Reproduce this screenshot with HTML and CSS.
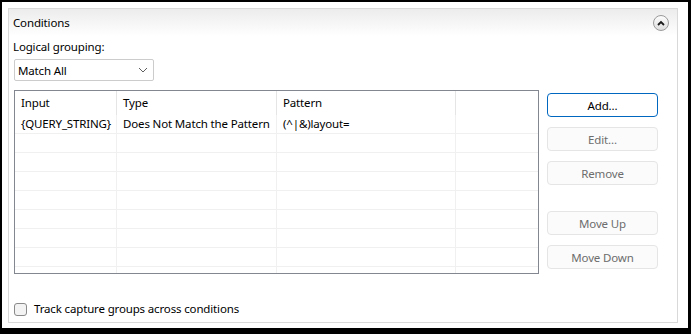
FILE: index.html
```html
<!DOCTYPE html>
<html lang="en">
<head>
    <meta charset="UTF-8">
    <title>Conditions</title>
    <link rel="stylesheet" href="styles.css">
</head>
<body>
    <div class="window">
        <div class="panel">
            <div class="panel-header">
                <span class="panel-title">Conditions</span>
                <span class="collapse-btn">
                    <svg width="8" height="6" viewBox="0 0 8 6"><path d="M1 5 L4 2 L7 5" fill="none" stroke="#1a1a1a" stroke-width="1.8"/></svg>
                </span>
            </div>

            <div class="panel-body">
                <div class="field-label">Logical grouping:</div>
                <div class="select">
                    <span>Match All</span>
                    <svg width="10" height="6" viewBox="0 0 10 6"><path d="M1 1 L5 5 L9 1" fill="none" stroke="#606060" stroke-width="1"/></svg>
                </div>

                <div class="main-row">
                    <div class="list-view">
                        <div class="list-row list-head">
                            <div class="cell">Input</div>
                            <div class="cell">Type</div>
                            <div class="cell">Pattern</div>
                            <div class="cell"></div>
                        </div>
                        <div class="list-row">
                            <div class="cell">{QUERY_STRING}</div>
                            <div class="cell">Does Not Match the Pattern</div>
                            <div class="cell">(^|&amp;)layout=</div>
                            <div class="cell"></div>
                        </div>
                        <div class="list-row"><div class="cell"></div><div class="cell"></div><div class="cell"></div><div class="cell"></div></div>
                        <div class="list-row"><div class="cell"></div><div class="cell"></div><div class="cell"></div><div class="cell"></div></div>
                        <div class="list-row"><div class="cell"></div><div class="cell"></div><div class="cell"></div><div class="cell"></div></div>
                        <div class="list-row"><div class="cell"></div><div class="cell"></div><div class="cell"></div><div class="cell"></div></div>
                        <div class="list-row"><div class="cell"></div><div class="cell"></div><div class="cell"></div><div class="cell"></div></div>
                        <div class="list-row"><div class="cell"></div><div class="cell"></div><div class="cell"></div><div class="cell"></div></div>
                        <div class="list-row"><div class="cell"></div><div class="cell"></div><div class="cell"></div><div class="cell"></div></div>
                        <div class="list-row"><div class="cell"></div><div class="cell"></div><div class="cell"></div><div class="cell"></div></div>
                    </div>

                    <div class="button-col">
                        <button class="btn btn-default">Add...</button>
                        <button class="btn">Edit...</button>
                        <button class="btn">Remove</button>
                        <button class="btn btn-spaced">Move Up</button>
                        <button class="btn">Move Down</button>
                    </div>
                </div>

                <label class="check">
                    <span class="check-box"></span>
                    <span>Track capture groups across conditions</span>
                </label>
            </div>
        </div>
    </div>
</body>
</html>
```

FILE: styles.css
```css
body {
    margin: 0;
    background-color: #000;
    font-family: "Noto Sans", "Open Sans", sans-serif;
    font-size: 11.5px;
    letter-spacing: -0.15px;
    color: #000;
}
.window {
    margin: 2px 3px 6px 2px;
    height: 326px;
    padding: 6px 10px 5px 6px;
    box-sizing: border-box;
    background-color: #fff;
}
.panel {
    height: 100%;
    border: 1px solid #d9d9d9;
    box-sizing: border-box;
    display: flex;
    flex-direction: column;
}
.panel-header {
    height: 27px;
    display: flex;
    align-items: center;
    justify-content: space-between;
    padding: 0 8px 0 4px;
    background: linear-gradient(#ececec, #ffffff);
}
.panel-title {
    line-height: 16px;
}
.collapse-btn {
    width: 14px;
    height: 14px;
    border: 1px solid #9a9a9a;
    border-radius: 50%;
    background: linear-gradient(#fdfdfd, #dedede);
    display: flex;
    align-items: center;
    justify-content: center;
}
.panel-body {
    flex: 1;
    padding: 3px 0 0 5px;
    display: flex;
    flex-direction: column;
}
.field-label {
    line-height: 16px;
    margin-left: -1px;
}
.select {
    margin-top: 4px;
    width: 140px;
    height: 22px;
    box-sizing: border-box;
    border: 1px solid #cccccc;
    border-radius: 2px;
    display: flex;
    align-items: center;
    justify-content: space-between;
    padding: 0 5px 0 3px;
}
.main-row {
    margin-top: 9px;
    display: flex;
    gap: 8px;
}
.list-view {
    width: 525px;
    height: 184px;
    box-sizing: border-box;
    border: 1px solid #828790;
    overflow: hidden;
}
.list-row {
    display: grid;
    grid-template-columns: 102px 160px 179px 82px;
    height: 19px;
    box-sizing: border-box;
    border-bottom: 1px solid #f0f0f0;
}
.list-row .cell {
    border-right: 1px solid #f0f0f0;
    padding-left: 6px;
    line-height: 18px;
    white-space: nowrap;
    overflow: hidden;
}
.list-row .cell:last-child {
    border-right: none;
}
.list-head {
    height: 24px;
    border-bottom: none;
}
.list-head .cell {
    line-height: 23px;
    border-right-color: #e5e5e5;
}
.button-col {
    display: flex;
    flex-direction: column;
    gap: 10px;
    padding-top: 3px;
}
.btn {
    width: 111px;
    height: 24px;
    font-family: inherit;
    font-size: 11.5px;
    letter-spacing: -0.15px;
    color: #6d6d6d;
    background-color: #fbfbfb;
    border: 1px solid #e5e5e5;
    border-radius: 4px;
    padding: 0;
}
.btn-default {
    color: #000;
    background-color: #fff;
    border-color: #0067c0;
}
.btn-spaced {
    margin-top: 16px;
}
.check {
    margin-top: auto;
    margin-bottom: 5px;
    display: flex;
    align-items: center;
    gap: 7px;
    line-height: 16px;
}
.check-box {
    width: 13px;
    height: 13px;
    box-sizing: border-box;
    border: 1px solid #8a8a8a;
    border-radius: 3px;
    background-color: #f3f3f3;
}
```
